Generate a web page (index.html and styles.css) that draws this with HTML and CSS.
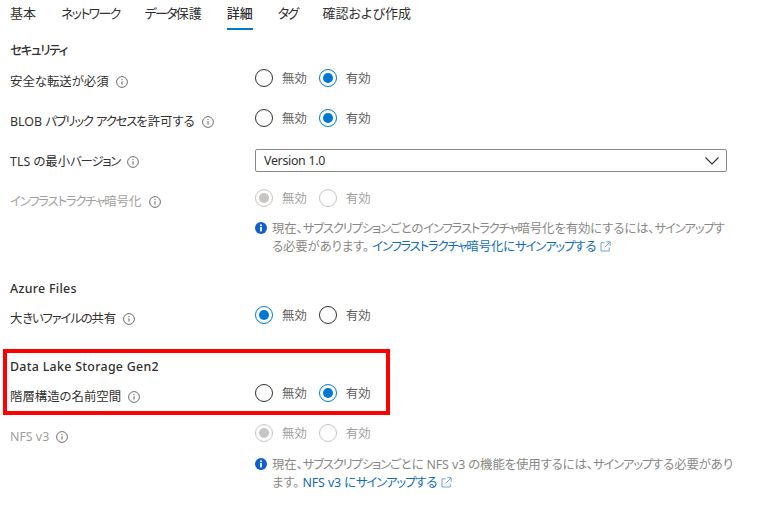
FILE: index.html
```html
<!DOCTYPE html>
<html lang="ja">
<head>
  <meta charset="UTF-8" />
  <title>詳細</title>
  <link rel="stylesheet" href="styles.css">
</head>
<body>

  <svg class="defs" width="0" height="0">
    <symbol id="i-help" viewBox="0 0 12 12">
      <circle cx="6" cy="6" r="5.4" fill="none" stroke="currentColor" stroke-width="0.9"/>
      <path d="M6 5.3v3.2" stroke="currentColor" stroke-width="1" fill="none"/>
      <circle cx="6" cy="3.6" r="0.65" fill="currentColor"/>
    </symbol>
    <symbol id="i-info" viewBox="0 0 12 12">
      <circle cx="6" cy="6" r="6" fill="#0f5fd0"/>
      <rect x="5.1" y="5" width="1.8" height="4.4" fill="#fff"/>
      <circle cx="6" cy="3.3" r="1.05" fill="#fff"/>
    </symbol>
    <symbol id="i-ext" viewBox="0 0 11 11">
      <path d="M4.500 1.800H1v8.200h8.200V6.500M6.200 0.800h4v4M10 1L4.800 6.200" fill="none" stroke="currentColor" stroke-width="0.9"/>
    </symbol>
  </svg>

  <nav class="tabs">
    <a href="#">基本</a>
    <a href="#"><span class="kana">ネットワーク</span></a>
    <a href="#"><span class="kana">データ</span>保護</a>
    <a href="#" class="active">詳細</a>
    <a href="#"><span class="kana">タグ</span></a>
    <a href="#">確認および作成</a>
  </nav>

  <main class="form">
    <h2 class="title title-first"><span class="kana">セキュリティ</span></h2>

    <div class="row">
      <div class="label">安全な転送が必須 <svg class="help"><use href="#i-help"/></svg></div>
      <div class="radios">
        <span class="opt"><i class="radio"></i>無効</span>
        <span class="opt"><i class="radio on"></i>有効</span>
      </div>
    </div>

    <div class="row">
      <div class="label">BLOB <span class="kana">パブリック</span> <span class="kana">アクセス</span>を許可する <svg class="help"><use href="#i-help"/></svg></div>
      <div class="radios">
        <span class="opt"><i class="radio"></i>無効</span>
        <span class="opt"><i class="radio on"></i>有効</span>
      </div>
    </div>

    <div class="row">
      <div class="label">TLS の最小<span class="kana">バージョン</span> <svg class="help"><use href="#i-help"/></svg></div>
      <div class="select">
        Version 1.0
        <svg class="chevron" viewBox="0 0 14 8"><path d="M0.500 0.500L7 7l6.500-6.500" fill="none" stroke="#323130" stroke-width="1.1"/></svg>
      </div>
    </div>

    <div class="row row-short disabled">
      <div class="label"><span class="kana">インフラストラクチャ</span>暗号化 <svg class="help"><use href="#i-help"/></svg></div>
      <div class="radios">
        <span class="opt"><i class="radio on"></i>無効</span>
        <span class="opt"><i class="radio"></i>有効</span>
      </div>
    </div>

    <div class="note">
      <svg class="note-icon"><use href="#i-info"/></svg>
      <p>現在、<span class="kana">サブスクリプション</span>ごとの<span class="kana">インフラストラクチャ</span>暗号化を有効にするには、<span class="kana">サインアップ</span>す<br>る必要があります。 <a href="#"><span class="kana">インフラストラクチャ</span>暗号化に<span class="kana">サインアップ</span>する <svg class="ext"><use href="#i-ext"/></svg></a></p>
    </div>

    <h2 class="title title-azure">Azure Files</h2>

    <div class="row">
      <div class="label">大<span class="kana">きいファイルの</span>共有 <svg class="help"><use href="#i-help"/></svg></div>
      <div class="radios">
        <span class="opt"><i class="radio on"></i>無効</span>
        <span class="opt"><i class="radio"></i>有効</span>
      </div>
    </div>

    <section class="highlight">
      <h2 class="title">Data Lake Storage Gen2</h2>
      <div class="row row-boxed">
        <div class="label">階層構造の名前空間 <svg class="help"><use href="#i-help"/></svg></div>
        <div class="radios">
          <span class="opt"><i class="radio"></i>無効</span>
          <span class="opt"><i class="radio on"></i>有効</span>
        </div>
      </div>
    </section>

    <div class="row row-nfs disabled">
      <div class="label">NFS v3 <svg class="help"><use href="#i-help"/></svg></div>
      <div class="radios">
        <span class="opt"><i class="radio on"></i>無効</span>
        <span class="opt"><i class="radio"></i>有効</span>
      </div>
    </div>

    <div class="note">
      <svg class="note-icon"><use href="#i-info"/></svg>
      <p>現在、<span class="kana">サブスクリプション</span>ごとに NFS v3 の機能を使用するには、<span class="kana">サインアップ</span>する必要があり<br>ます。 <a href="#">NFS v3 に<span class="kana">サインアップ</span>する <svg class="ext"><use href="#i-ext"/></svg></a></p>
    </div>
  </main>

</body>
</html>
```

FILE: styles.css
```css
body {
  margin: 0;
  padding: 0 0 0 10px;
  font-family: "Noto Sans", "Noto Sans CJK JP", sans-serif;
  font-feature-settings: "palt";
  font-size: 12.4px;
  line-height: 18px;
  background-color: #ffffff;
  color: #323130;
  overflow: hidden;
}

.defs {
  position: absolute;
}

.kana {
  letter-spacing: -1.2px;
}

.tabs {
  display: flex;
  gap: 25px;
  height: 29px;
  font-size: 13px;
}

.tabs .kana {
  letter-spacing: -1.7px;
}

.tabs a {
  height: 27px;
  padding-top: 4px;
  box-sizing: border-box;
  color: #323130;
  text-decoration: none;
}

.tabs a.active {
  height: 30px;
  border-bottom: 2px solid #0078d4;
  font-weight: 500;
}

.title {
  height: 18px;
  margin: 0 0 9px;
  font-size: 12.4px;
  font-weight: 500;
  line-height: 20px;
  letter-spacing: 0.3px;
}

.title-first {
  margin-top: 12px;
  margin-bottom: 10px;
}

.title-azure {
  margin-top: 24px;
}

.row {
  display: grid;
  grid-template-columns: 245px 1fr;
  height: 40px;
}

.row-short {
  height: 30px;
}

.row-boxed {
  height: 27px;
}

.row-nfs {
  height: 31px;
}

.label {
  margin-top: 4px;
  height: 18px;
  white-space: nowrap;
}

.help {
  width: 12px;
  height: 12px;
  margin-left: 4px;
  vertical-align: -2px;
  color: #605e5c;
}

.radios {
  display: flex;
  gap: 12px;
  height: 18px;
}

.opt {
  display: flex;
  align-items: flex-start;
  gap: 9px;
  line-height: 20px;
  color: #605e5c;
}

.radio {
  position: relative;
  flex: none;
  width: 18px;
  height: 18px;
  box-sizing: border-box;
  border: 1px solid #323130;
  border-radius: 50%;
}

.radio.on {
  border-color: #0078d4;
}

.radio.on::after {
  content: "";
  position: absolute;
  top: 3px;
  left: 3px;
  width: 10px;
  height: 10px;
  border-radius: 50%;
  background-color: #0078d4;
}

.disabled .label,
.disabled .opt {
  color: #a19f9d;
}

.disabled .help {
  color: #605e5c;
}

.disabled .radio {
  border-color: #c8c6c4;
}

.disabled .radio.on::after {
  background-color: #c8c6c4;
}

.select {
  display: flex;
  align-items: center;
  justify-content: space-between;
  width: 472px;
  height: 23px;
  padding: 1px 7px 0 8px;
  box-sizing: border-box;
  border: 1px solid #8a8886;
  border-radius: 2px;
  letter-spacing: -0.3px;
}

.chevron {
  width: 14px;
  height: 8px;
}

.note {
  display: flex;
  gap: 5px;
  height: 36px;
  margin-left: 245px;
  width: 480px;
  color: #8a8886;
  letter-spacing: -0.1px;
}

.note-icon {
  flex: none;
  width: 12px;
  height: 12px;
  margin-top: 3px;
}

.note p {
  margin: 1px 0 0;
}

.note a {
  color: #0f6cbd;
  text-decoration: none;
}

.ext {
  width: 11px;
  height: 11px;
  margin-left: 1px;
  vertical-align: -1px;
  color: #5b9bd5;
}

.highlight {
  box-sizing: border-box;
  width: 387px;
  height: 66px;
  margin: 3px 0 9px -7px;
  padding: 4px 0 0 3px;
  border: 4px solid #ff0000;
}
```
